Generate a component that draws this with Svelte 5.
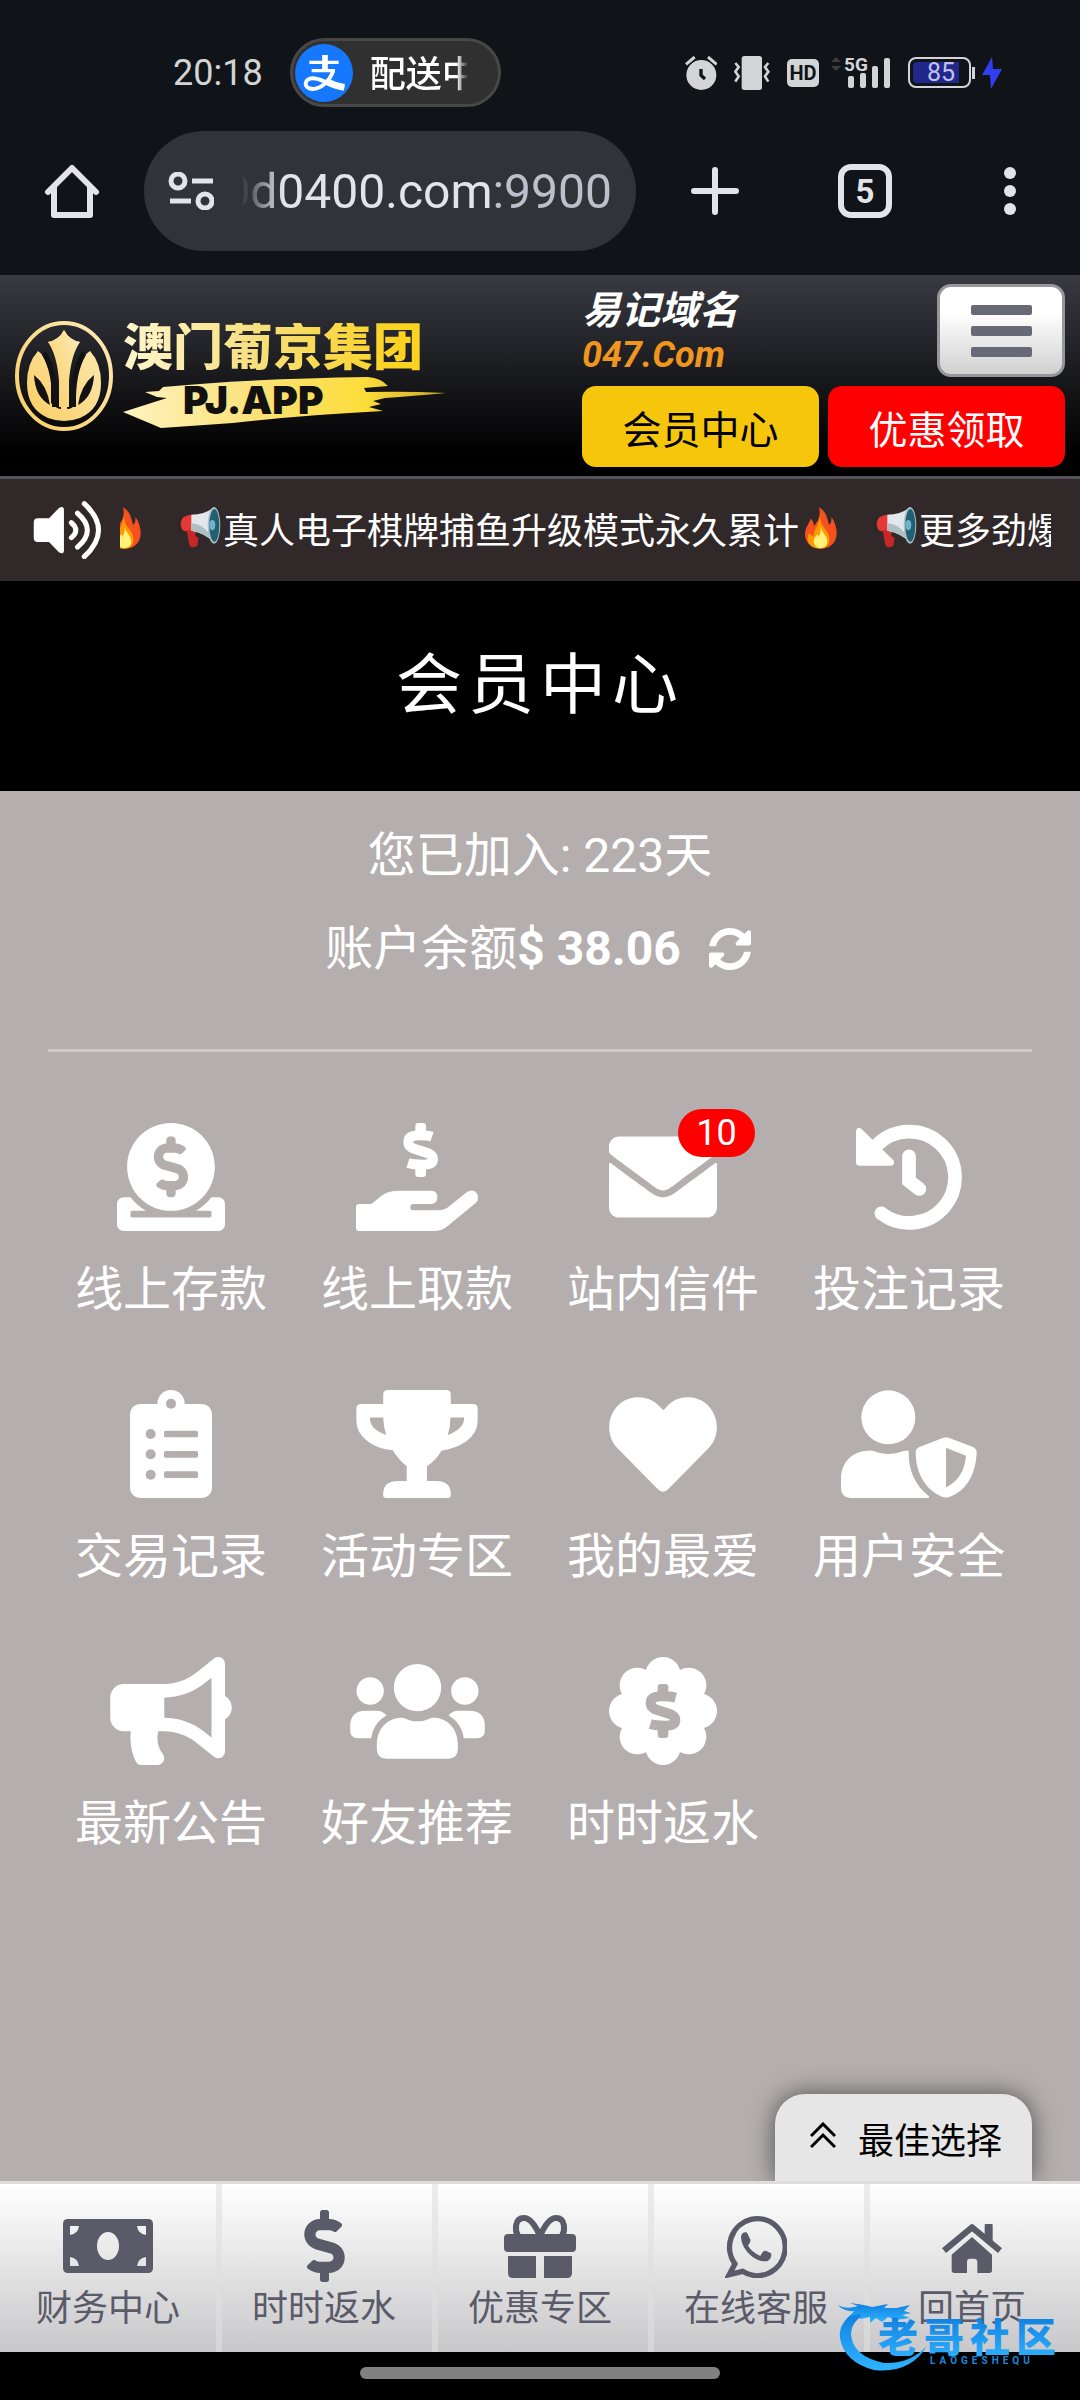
<script>
  const scroll = 17;

  const fire =
    '<path fill="#f4511e" d="M60 4C88 20 84 46 91 56c7-6 7-16 6-24 15 22 19 46 14 64-6 22-24 32-45 32-27 0-46-16-48-40-1-22 12-34 17-50 8 6 9 14 10 22C58 46 66 28 60 4Z"/>' +
    '<path fill="#ff9800" d="M62 30c2 24 12 32 22 46 10 16 16 50-20 52-32 1-46-24-34-46 8 6 10 8 14 8C44 70 62 54 62 30Z"/>' +
    '<path fill="#fff176" d="M65 60c0 18 20 26 20 46 0 14-8 20-20 20s-22-8-21-22c1-10 8-14 12-20l3 8c5-8 7-20 6-32Z"/>';
  const horn =
    '<path fill="#e53935" d="M16 34Q32 24 52 26V74Q30 78 16 74Q8 66 8 54T16 34Z"/>' +
    '<path fill="#c62828" d="M26 72L54 74L52 90L62 96L58 118Q56 124 46 124Q36 124 34 116Z"/>' +
    '<path fill="#e3e8ec" d="M40 26Q80 26 106 5L112 112Q84 82 40 74Z"/>' +
    '<path fill="#b0bec5" d="M40 52Q80 54 100 96L110 112Q84 82 40 74Z"/>' +
    '<ellipse cx="108" cy="58" rx="19" ry="55" fill="#b0bec5"/><ellipse cx="109" cy="58" rx="15" ry="49" fill="#1f6173"/>' +
    '<ellipse cx="103" cy="57" rx="9" ry="16" fill="#6fb3cc"/>';

  const money =
    '<path fill="none" stroke="currentColor" stroke-width="30" d="M232 41C216 37 208 37 190 37C165 37 157 45 157 58C157 72 170 77 192 83C220 91 231 95 231 108C231 120 222 125 200 125C180 125 172 125 156 120"/>' +
    '<rect x="178" width="32" height="34" rx="9"/><rect x="178" y="128" width="32" height="34" rx="9"/>';

  const items = [
    { label: '线上存款', w: 108, box: '0 0 512 512', art: '<path d="M256 416c114.900 0 208-93.100 208-208S370.900 0 256 0 48 93.100 48 208s93.100 208 208 208zM233.800 97.400V80.600c0-9.200 7.400-16.600 16.600-16.600h11.100c9.200 0 16.600 7.400 16.600 16.600v17c15.500.8 30.500 6.100 43 15.400 5.600 4.100 6.200 12.300 1.200 17.100L306 145.600c-3.800 3.700-9.500 3.800-14 1-5.400-3.400-11.400-5.100-17.800-5.100h-38.900c-9 0-16.300 8.200-16.300 18.300 0 8.200 5 15.500 12.100 17.600l62.300 18.700c25.700 7.700 43.700 32.400 43.700 60.100 0 34-26.400 61.500-59.100 62.400v16.800c0 9.200-7.400 16.600-16.600 16.600h-11.100c-9.200 0-16.600-7.400-16.600-16.600v-17c-15.500-.8-30.500-6.100-43-15.400-5.600-4.100-6.200-12.300-1.200-17.100l16.300-15.500c3.800-3.700 9.500-3.800 14-1 5.400 3.400 11.400 5.100 17.800 5.100h38.900c9 0 16.300-8.200 16.300-18.300 0-8.200-5-15.500-12.100-17.600l-62.300-18.700c-25.700-7.700-43.700-32.400-43.700-60.100.1-34 26.400-61.500 59.100-62.400zM480 352h-32.500c-19.600 26-44.600 47.700-73 64h63.800c5.300 0 9.600 3.600 9.600 8v16c0 4.400-4.300 8-9.600 8H73.600c-5.300 0-9.600-3.600-9.600-8v-16c0-4.400 4.300-8 9.600-8h63.800c-28.400-16.300-53.300-38-73-64H32c-17.700 0-32 14.300-32 32v96c0 17.700 14.300 32 32 32h448c17.700 0 32-14.300 32-32v-96c0-17.700-14.300-32-32-32z"/>' },
    { label: '线上取款', w: 122, box: '0 0 366 324', art: money.replaceAll('M232', 'M228') + '<path d="M0 252Q0 243 9 243H46L72 222Q94 203 124 203H226Q244 204 244 223T226 243H172Q163 243 163 253T172 262H246Q262 262 272 256L332 208Q342 201 352 203Q366 208 366 224Q366 234 358 241L276 308Q258 324 234 324H9Q0 324 0 315Z"/>' },
    { label: '站内信件', w: 108, badge: 10, box: '0 0 512 512', art: '<path d="M502.300 190.800c3.900-3.100 9.700-.2 9.700 4.700V400c0 26.500-21.500 48-48 48H48c-26.500 0-48-21.500-48-48V195.600c0-5 5.700-7.800 9.700-4.700 22.400 17.400 52.100 39.500 154.100 113.600 21.100 15.400 56.700 47.800 92.200 47.600 35.700.3 72-32.800 92.300-47.600 102-74.100 131.600-96.300 154-113.700zM256 320c23.200.4 56.600-29.200 73.400-41.400 132.700-96.300 142.800-104.700 173.400-128.700 5.800-4.500 9.200-11.500 9.200-18.900v-19c0-26.500-21.500-48-48-48H48c-26.500 0-48 21.500-48 48v19c0 7.400 3.400 14.300 9.200 18.900 30.600 23.900 40.700 32.400 173.400 128.700 16.800 12.200 50.200 41.800 73.400 41.400z"/>' },
    { label: '投注记录', w: 108, box: '0 0 324 324', art: '<path fill="none" stroke="currentColor" stroke-width="41" stroke-linecap="round" d="M66 66A137 137 0 1 1 79 271M162 100V174L193 198"/><path d="M3 25Q6 8 19 17L115 112Q122 126 108 128H12Q3 128 3 118Z"/>' },
    { label: '交易记录', w: 82, box: '0 0 246 324', art: '<rect y="42" width="246" height="282" rx="30"/><circle cx="123" cy="41" r="41"/><g fill="#b4aeae"><circle cx="123" cy="41" r="15"/><circle cx="62" cy="132" r="15"/><circle cx="62" cy="193" r="15"/><circle cx="62" cy="254" r="15"/><rect x="102" y="122" width="102" height="20" rx="5"/><rect x="102" y="183" width="102" height="20" rx="5"/><rect x="102" y="244" width="102" height="20" rx="5"/></g>' },
    { label: '活动专区', w: 122, box: '0 0 366 326', art: '<path fill-rule="evenodd" d="M81 14Q81 0 95 0H271Q285 0 285 14V42H352Q366 42 366 56V94Q366 130 330 156Q300 176 257 183Q240 212 213 230V275H240Q284 275 285 312V318Q285 326 277 326H89Q81 326 81 318V312Q82 275 126 275H152V230Q128 212 110 182Q66 178 36 156Q0 130 0 94V56Q0 42 14 42H81ZM41 83V90Q44 120 90 136Q82 112 81 83ZM284 83Q284 112 276 136Q322 118 325 90V83Z"/>' },
    { label: '我的最爱', w: 108, box: '0 -21 324 324', art: '<path d="M163 40L148 25C118-6 62-8 28 24C-8 60-8 118 24 152L146 276Q162 293 178 276L300 152C332 118 332 60 296 24C262-8 206-6 177 25Z"/>' },
    { label: '用户安全', w: 136, box: '0 0 408 324', art: '<circle cx="142" cy="82" r="81"/><path d="M82 182Q98 181 108 187Q142 197 176 187Q190 181 203 182C202 246 224 286 264 319Q266 324 260 324H32Q0 324 0 292V266C0 218 34 182 82 182Z"/><path fill-rule="evenodd" d="M305 144Q315 140 325 144L396 171Q407 176 407 187C405 250 378 300 330 319Q315 326 300 319C250 297 224 245 224 187Q224 176 235 171ZM315 173V292Q370 264 375 197Z"/>' },
    { label: '最新公告', w: 122, box: '0 0 576 512', art: '<path d="M576 240c0-23.630-12.950-44.040-32-55.120V32.010C544 23.260 537.020 0 512 0c-7.120 0-14.190 2.380-19.980 7.020l-85.030 68.030C364.280 109.190 310.660 128 256 128H64c-35.350 0-64 28.650-64 64v96c0 35.350 28.650 64 64 64h33.700c-1.390 10.480-2.180 21.140-2.180 32 0 39.770 9.260 77.350 25.560 110.940 5.190 10.690 16.520 17.060 28.400 17.060h74.280c26.050 0 41.690-29.840 25.900-50.560-16.400-21.520-26.150-48.360-26.150-77.440 0-11.110 1.620-21.790 4.410-32H256c54.660 0 108.280 18.810 150.980 52.950l85.030 68.030a32.023 32.023 0 0 0 19.980 7.020c24.920 0 32-22.780 32-32V295.130C563.050 284.040 576 263.630 576 240zm-96 141.420l-33.050-26.440C392.950 311.780 325.120 288 256 288v-96c69.120 0 136.950-23.780 190.950-66.980L480 98.580v282.840z"/>' },
    { label: '好友推荐', w: 135, box: '0 0 404 324', art: '<circle cx="202" cy="92" r="71"/><circle cx="60" cy="102" r="41"/><circle cx="344" cy="102" r="41"/><path d="M80 264C80 214 112 182 155 182C168 182 170 192 202 193C234 192 236 182 249 182C292 182 323 214 323 264V276Q323 305 294 305H109Q80 305 80 276Z"/><path d="M0 208Q0 161 46 161H80Q98 161 109 175Q68 200 63 244H24Q0 244 0 220Z"/><path d="M404 208Q404 161 358 161H324Q306 161 295 175Q336 200 341 244H380Q404 244 404 220Z"/>' },
    { label: '时时返水', w: 108, box: '0 0 324 324', art: '<circle cx="162" cy="162" r="120"/>' + [0, 45, 90, 135, 180, 225, 270, 315].map((a) => `<circle cx="162" cy="53" r="53" transform="rotate(${a} 162 162)"/>`).join('') + '<g fill="#b4aeae" color="#b4aeae" transform="translate(-32 81)">' + money + '</g>' }
  ];

  const tabs = [
    { label: '财务中心', w: 90, h: 54, box: '0 0 90 54', art: '<path fill-rule="evenodd" d="M5 0H85Q90 0 90 5V49Q90 54 85 54H5Q0 54 0 49V5Q0 0 5 0ZM7 7V16Q15 15 16 7ZM74 7Q75 15 83 16V7ZM7 38V47H16Q15 39 7 38ZM83 38Q75 39 74 47H83ZM45 13A11 14 0 1 0 45 41A11 14 0 1 0 45 13Z"/>' },
    { label: '时时返水', w: 41, h: 72, box: '0 0 288 512', art: '<path d="M209.200 233.400l-108-31.600C88.700 198.200 80 186.500 80 173.500c0-16.300 13.200-29.500 29.500-29.500h66.300c12.200 0 24.200 3.700 34.200 10.500 6.100 4.100 14.300 3.100 19.500-2l34.800-34c7.100-6.900 6.100-18.400-1.800-24.500C238 74.800 207.400 64.100 176 64V16c0-8.800-7.200-16-16-16h-32c-8.800 0-16 7.200-16 16v48h-2.500C45.800 64-5.400 118.700.5 183.600c4.200 46.100 39.400 83.600 83.800 96.600l102.500 30c12.500 3.700 21.200 15.300 21.200 28.300 0 16.300-13.200 29.500-29.500 29.500h-66.300C100 368 88 364.300 78 357.500c-6.100-4.100-14.300-3.100-19.500 2l-34.800 34c-7.100 6.900-6.100 18.400 1.800 24.500 24.500 19.200 55.100 29.900 86.500 30v48c0 8.800 7.200 16 16 16h32c8.800 0 16-7.200 16-16v-48.200c46.600-.9 90.300-28.600 105.700-72.700 21.500-61.600-14.600-124.800-72.500-141.700z"/>' },
    { label: '优惠专区', w: 72, h: 63, box: '0 0 72 63', art: '<rect y="19" width="72" height="18" rx="4"/><path d="M4 41H32V63H9Q4 63 4 58ZM40 41H68V58Q68 63 63 63H40Z"/><path fill="none" stroke="currentColor" stroke-width="6" d="M36 21C32 12 27 3 20 3C10 3 11 16 14 21M36 21C40 12 45 3 52 3C62 3 61 16 58 21"/>' },
    { label: '在线客服', w: 62, h: 63, box: '537 463 182 188', art: '<path fill="none" stroke="currentColor" stroke-width="16" d="M565 609A83 85 0 1 1 588 631L548 641Z"/><path d="M583 528Q586 513 601 515L611 536Q613 545 604 554Q615 574 641 585Q649 568 657 570L673 577Q676 592 663 600Q641 606 615 586Q584 560 583 528Z"/>' },
    { label: '回首页', w: 60, h: 53, box: '1164 486 180 159', art: '<path fill="none" stroke="currentColor" stroke-width="19" stroke-linejoin="round" d="M1170 578L1254 508L1338 578"/><rect x="1292" y="498" width="24" height="52" rx="3"/><path d="M1193 590L1254 537L1314 590V637Q1314 645 1306 645H1270V612Q1270 602 1260 602H1248Q1239 602 1239 612V645H1201Q1193 645 1193 637Z"/>' }
  ];
</script>

<div class="page">
  <div class="status">
    <div class="status-left">
      <span class="time">20:18</span>
      <div class="activity">
        <svg width="58" height="58" viewBox="0 0 174 174" aria-hidden="true">
          <circle cx="87" cy="87" r="87" fill="#1677ff" />
          <g fill="none" stroke="#fff" stroke-width="12">
            <path d="M43 55H131M50 80H120" stroke-width="10" />
            <path d="M90 33V81" stroke-width="17" />
            <path d="M114 81C106 106 82 135 52 135C24 133 26 103 54 103C76 103 92 120 148 128" stroke-width="12" />
            <path d="M98 114Q120 126 148 130" stroke-width="20" />
          </g>
        </svg>
        <span class="activity-text">配送中</span>
      </div>
    </div>
    <div class="status-right">
      <svg width="32" height="34" viewBox="66 45 94 102" aria-hidden="true">
        <circle cx="114" cy="102" r="45" fill="#d3d4d5" />
        <path d="M68 70L94 48M160 70L134 48" stroke="#d3d4d5" stroke-width="9" />
        <path d="M113 84V103L125 114" fill="none" stroke="#101418" stroke-width="10" />
      </svg>
      <svg width="36" height="34" viewBox="218 45 108 102" aria-hidden="true">
        <rect x="241" y="45" width="61" height="102" rx="8" fill="#d3d4d5" />
        <path d="M222 66L232 78L222 92L232 106L222 122M321 66L311 78L321 92L311 106L321 122" fill="none" stroke="#d3d4d5" stroke-width="8" />
      </svg>
      <div class="network">
        <span class="hd">HD</span>
        <svg width="60" height="34" viewBox="0 0 60 34" aria-label="5G">
          <path d="M0 6L5 1L10 6ZM0 10L5 15L10 10Z" fill="#3a3d40" />
          <text x="13" y="15" font-size="19" font-weight="700" fill="#d3d4d5">5G</text>
          <g fill="#d3d4d5"><rect x="17" y="20" width="6" height="12" rx="2" /><rect x="29" y="17" width="6" height="15" rx="2" /><rect x="41" y="10" width="6" height="22" rx="2" /><rect x="53" y="2" width="6" height="30" rx="2" /></g>
        </svg>
      </div>
      <div class="power">
        <span class="battery"><span class="charge">85</span></span>
        <i class="cap"></i>
        <svg width="20" height="32" viewBox="0 0 20 32" aria-hidden="true"><path d="M10 0L0 18H8L9 32L20 12H11Z" fill="#2f3ff0" /></svg>
      </div>
    </div>
  </div>

  <div class="toolbar">
    <button class="tool home" aria-label="主页">
      <svg width="56" height="56" viewBox="0 0 56 56" fill="none" stroke="#e2e4ea" stroke-width="6" stroke-linecap="round" stroke-linejoin="round"><path d="M4 29L28 5L52 29" /><path d="M10 25V52H46V25" /></svg>
    </button>
    <button class="address">
      <svg width="46" height="38" viewBox="0 0 46 38" fill="none" stroke="#e2e4ea" stroke-width="5"><circle cx="10" cy="9" r="7" /><path d="M24 9H45M2 29H23" /><circle cx="37" cy="29" r="7" /></svg>
      <span class="url">0d0400.com<span class="port">:9900</span></span>
    </button>
    <button class="tool" aria-label="新标签页">
      <svg width="48" height="48" viewBox="0 0 48 48" stroke="#e2e4ea" stroke-width="6" stroke-linecap="round"><path d="M24 3V45M3 24H45" /></svg>
    </button>
    <button class="tool"><span class="count">5</span></button>
    <button class="tool more" aria-label="更多">
      <svg width="12" height="48" viewBox="0 0 12 48" fill="#e2e4ea"><circle cx="6" cy="6" r="6" /><circle cx="6" cy="24" r="6" /><circle cx="6" cy="42" r="6" /></svg>
    </button>
  </div>

  <header class="site">
    <a class="logo" href="#home">
      <svg class="emblem" width="98" height="110" viewBox="0 0 98 110" aria-hidden="true">
        <defs><linearGradient id="gold" x1="0" x2="1" y1="1" y2="0"><stop offset="0" stop-color="#f9cd62" /><stop offset="1" stop-color="#fdebb8" /></linearGradient></defs>
        <ellipse cx="49" cy="55" rx="47" ry="53" fill="none" stroke="url(#gold)" stroke-width="4" />
        <g fill="url(#gold)">
          <path d="M23 30Q34 38 36 58V82Q42 88 46 88V50Q44 30 33 21Q44 19 49 9Q54 19 65 21Q54 30 52 50V88Q58 88 61 82V58Q63 38 75 30Q86 42 86 62Q86 88 65 97Q49 103 33 97Q12 88 12 62Q12 42 23 30Z" />
          <path d="M33 21Q44 19 49 9Q54 19 65 21Q56 34 54 60V86H44V60Q42 34 33 21Z" />
        </g>
        <path d="M31 30Q43 50 43 86H37Q38 52 27 34ZM67 30Q55 50 55 86H61Q60 52 71 34ZM19 54Q32 64 35 84Q20 76 19 54ZM79 54Q66 64 63 84Q78 76 79 54Z" fill="#121215" />
      </svg>
      <span class="brand">
        <span class="brand-name">澳门葡京集团</span>
        <svg width="324" height="52" viewBox="0 0 324 52" aria-label="PJ.APP">
          <defs><linearGradient id="brush" x1="0" x2="1"><stop offset="0" stop-color="#fff3c0" /><stop offset="0.4" stop-color="#fbe27a" /><stop offset="0.75" stop-color="#fddd3a" /><stop offset="1" stop-color="#c9a52a" /></linearGradient></defs>
          <path fill="url(#brush)" d="M0 35L44 21L34 20L22 15L36 14L40 10Q120 2 245 0Q258 1 265 9L241 11L243 15Q285 14 323 16Q290 19 262 21L250 24L258 27L246 30L260 34Q180 38 110 46L38 51Z" />
          <text x="60" y="37" font-size="39" font-weight="900" fill="#111">PJ.APP</text>
        </svg>
      </span>
    </a>
    <div class="quick">
      <div class="quick-top">
        <p class="domain">易记域名<br /><span>047.Com</span></p>
        <button class="menu" aria-label="菜单"><i></i><i></i><i></i></button>
      </div>
      <div class="quick-actions">
        <button class="member">会员中心</button>
        <button class="promo">优惠领取</button>
      </div>
    </div>
  </header>

  <div class="notice">
    <svg class="speaker" width="69" height="58" viewBox="97 693 199 171" fill="none" stroke="#fff" stroke-width="15" stroke-linecap="round" aria-hidden="true">
      <path fill="#fff" stroke="none" d="M109 744H142L172 713Q186 706 186 720V838Q186 852 172 845L142 814H109Q97 814 97 802V756Q97 744 109 744Z" />
      <path d="M208 757Q234 779 208 801M226 729Q284 779 226 829M246 701Q330 779 246 857" />
    </svg>
    <div class="window">
      <div class="track" style="transform: translateX({-scroll}px)">
        <span class="news"><svg class="emoji" viewBox="0 0 135 135" aria-hidden="true">{@html fire}</svg></span>
        <span class="news"><svg class="emoji" viewBox="0 0 135 135" aria-hidden="true">{@html horn}</svg>真人电子棋牌捕鱼升级模式永久累计<svg class="emoji" viewBox="0 0 135 135" aria-hidden="true">{@html fire}</svg></span>
        <span class="news"><svg class="emoji" viewBox="0 0 135 135" aria-hidden="true">{@html horn}</svg>更多劲爆</span>
      </div>
    </div>
  </div>

  <h1>会员中心</h1>

  <main>
    <p class="line">您已加入: 223天</p>
    <p class="line balance">
      <span>账户余额<b>$ 38.06</b></span>
      <button class="refresh" aria-label="刷新">
        <svg width="42" height="42" viewBox="8 8 496 496" fill="#fff"><path d="M370.720 133.280C339.458 104.008 298.888 87.962 255.848 88c-77.458.068-144.328 53.178-162.791 126.850-1.344 5.363-6.122 9.150-11.651 9.150H24.103c-7.498 0-13.194-6.807-11.807-14.176C33.933 94.924 134.813 8 256 8c66.448 0 126.791 26.136 171.315 68.685L463.030 40.970C478.149 25.851 504 36.559 504 57.941V192c0 13.255-10.745 24-24 24H345.941c-21.382 0-32.090-25.851-16.971-40.971l41.750-41.749zM32 296h134.059c21.382 0 32.090 25.851 16.971 40.971l-41.750 41.750c31.262 29.273 71.835 45.319 114.876 45.280 77.418-.07 144.315-53.144 162.787-126.849 1.344-5.363 6.122-9.150 11.651-9.150h57.304c7.498 0 13.194 6.807 11.807 14.176C478.067 417.076 377.187 504 256 504c-66.448 0-126.791-26.136-171.315-68.685L48.970 471.030C33.851 486.149 8 475.441 8 454.059V320c0-13.255 10.745-24 24-24z" /></svg>
      </button>
    </p>
    <hr />
    <div class="grid">
      {#each items as item}
        <a class="cell" href="#member">
          <span class="pic">
            <svg width={item.w} height="108" viewBox={item.box} fill="currentColor" aria-hidden="true">{@html item.art}</svg>
            {#if item.badge}<span class="badge">{item.badge}</span>{/if}
          </span>
          <span>{item.label}</span>
        </a>
      {/each}
    </div>
    <button class="best">
      <svg width="26" height="26" viewBox="0 0 26 26" fill="none" stroke="#000" stroke-width="3"><path d="M1 14L13 2L25 14M1 25L13 13L25 25" /></svg>
      最佳选择
    </button>
  </main>

  <nav>
    {#each tabs as tab}
      <a href="#tab">
        <span class="tab-pic"><svg width={tab.w} height={tab.h} viewBox={tab.box} fill="currentColor" aria-hidden="true">{@html tab.art}</svg></span>
        <span>{tab.label}</span>
      </a>
    {/each}
  </nav>

  <div class="gesture"><i></i></div>

  <svg class="watermark" width="240" height="90" viewBox="0 0 240 90" aria-label="老哥社区">
    <defs><linearGradient id="sea" x1="0" x2="0" y1="0" y2="1"><stop offset="0" stop-color="#0f7fe0" /><stop offset="1" stop-color="#2fb4ff" /></linearGradient></defs>
    <g fill="url(#sea)">
      <path d="M24 22Q8 34 10 48Q14 72 44 80Q80 84 97 56Q80 74 54 73Q22 66 21 44Q21 32 34 25Z" />
      <path d="M8 15Q16 20 28 16L20 13Q36 15 42 17L58 14L54 18L66 18L80 15L74 21L81 23L72 25L80 28L66 30L58 27L52 32L46 28L40 33L40 27L30 29L30 24L20 26L24 21Q14 22 8 15Z" />
      <text class="mark" x="48" y="62">老哥社区</text>
    </g>
    <text class="mark-sub" x="100" y="74">LAOGESHEQU</text>
  </svg>
</div>

<style>
  :global(body) {
    margin: 0;
    background: #000;
  }
  .page {
    position: relative;
    min-height: 100vh;
    display: flex;
    flex-direction: column;
    font-family: Roboto, 'Noto Sans CJK SC', sans-serif;
    color: #fff;
    overflow: hidden;
  }
  button {
    font: inherit;
    color: inherit;
    border: 0;
    padding: 0;
    background: none;
    cursor: pointer;
  }
  a {
    color: inherit;
    text-decoration: none;
  }
  svg {
    display: block;
    flex: none;
  }
  p {
    margin: 0;
  }

  .status {
    display: flex;
    justify-content: space-between;
    align-items: center;
    padding: 38px 78px 24px 173px;
    background: #101418;
  }
  .status-left,
  .status-right,
  .network,
  .power {
    display: flex;
    align-items: center;
  }
  .status-left {
    gap: 27px;
  }
  .status-right {
    gap: 17px;
  }
  .network {
    gap: 12px;
  }
  .time {
    font-size: 36px;
    color: #d3d4d5;
  }
  .activity {
    box-sizing: border-box;
    display: flex;
    align-items: center;
    width: 211px;
    height: 69px;
    padding-left: 2px;
    gap: 17px;
    border: 3px solid #474747;
    border-radius: 35px;
    background: #303030;
  }
  .activity-text {
    width: 98px;
    padding-bottom: 4px;
    overflow: hidden;
    white-space: nowrap;
    font-size: 36px;
    font-weight: 500;
    mask-image: linear-gradient(90deg, #000 88%, transparent);
  }
  .hd {
    width: 32px;
    line-height: 28px;
    border-radius: 5px;
    background: #d3d4d5;
    color: #101418;
    font-size: 20px;
    font-weight: 700;
    text-align: center;
  }
  .battery {
    box-sizing: border-box;
    width: 63px;
    height: 31px;
    padding: 3px;
    border: 2px solid #d3d4d5;
    border-radius: 8px;
  }
  .charge {
    box-sizing: border-box;
    display: block;
    width: 46px;
    padding-right: 4px;
    line-height: 21px;
    border-radius: 4px 0 0 4px;
    background: #20288c;
    color: #c0c2ee;
    font-size: 25px;
    text-align: right;
  }
  .cap {
    width: 3px;
    height: 12px;
    margin: 0 7px 0 1px;
    background: #d3d4d5;
  }

  .toolbar {
    display: flex;
    align-items: center;
    padding-bottom: 24px;
    background: #101418;
  }
  .tool {
    display: flex;
    justify-content: center;
    align-items: center;
    width: 150px;
    height: 120px;
  }
  .home {
    width: 144px;
  }
  .more {
    width: 140px;
  }
  .address {
    flex: 1;
    min-width: 0;
    display: flex;
    align-items: center;
    gap: 27px;
    height: 120px;
    margin-right: 4px;
    padding: 0 24px;
    border-radius: 60px;
    background: #303338;
    color: #e2e4ea;
    font-size: 48px;
  }
  .url {
    flex: 1;
    min-width: 0;
    display: flex;
    justify-content: flex-end;
    overflow: hidden;
    white-space: nowrap;
    mask-image: linear-gradient(90deg, transparent, #000 42px);
  }
  .port {
    color: #bcc0cb;
  }
  .count {
    box-sizing: border-box;
    width: 54px;
    height: 54px;
    border: 6px solid #e2e4ea;
    border-radius: 13px;
    color: #e2e4ea;
    font-size: 33px;
    font-weight: 700;
    line-height: 43px;
  }

  .site {
    display: flex;
    justify-content: space-between;
    align-items: center;
    padding: 9px 15px;
    border-bottom: 3px solid #54535a;
    background: linear-gradient(#393a42, #000 90%);
  }
  .logo {
    display: flex;
    align-items: center;
    gap: 10px;
  }
  .brand {
    display: flex;
    flex-direction: column;
    gap: 4px;
  }
  .brand-name {
    font-size: 50px;
    line-height: 50px;
    font-weight: 900;
    background: linear-gradient(90deg, #fff6cf, #f7df7c 45%, #fbd21f 92%);
    background-clip: text;
    color: transparent;
    width: max-content;
  }
  .brand text {
    font-family: Inter, 'Liberation Sans', sans-serif;
  }
  .quick {
    display: flex;
    flex-direction: column;
    gap: 9px;
    width: 483px;
  }
  .quick-top {
    display: flex;
    justify-content: space-between;
    align-items: flex-end;
  }
  .domain {
    font-size: 39px;
    font-weight: 700;
    font-style: italic;
    line-height: 43px;
  }
  .domain span {
    color: #f0951e;
    font-size: 36px;
  }
  .menu {
    box-sizing: border-box;
    width: 128px;
    height: 93px;
    display: flex;
    flex-direction: column;
    align-items: center;
    justify-content: center;
    gap: 11px;
    border: 3px solid #96969c;
    border-radius: 14px;
    background: linear-gradient(#fff 30%, #d0d0d0);
  }
  .menu i {
    width: 61px;
    height: 10px;
    border-radius: 2px;
    background: #686977;
  }
  .quick-actions {
    display: grid;
    grid-template-columns: 1fr 1fr;
    gap: 9px;
  }
  .quick-actions button {
    height: 81px;
    border-radius: 14px;
    font-size: 39px;
  }
  .member {
    background: #f5c60c;
    color: #000;
  }
  .promo {
    background: #f00;
  }

  .notice {
    display: flex;
    align-items: center;
    gap: 18px;
    height: 102px;
    padding: 0 29px 0 33px;
    background: #312829;
    font-size: 36px;
  }
  .window {
    flex: 1;
    min-width: 0;
    padding-bottom: 4px;
    overflow: hidden;
  }
  .track {
    display: flex;
    gap: 30px;
    width: max-content;
  }
  .news {
    display: flex;
    align-items: center;
    white-space: nowrap;
  }
  .emoji {
    width: 45px;
    height: 45px;
  }

  h1 {
    margin: 0;
    font-size: 66px;
    font-weight: 400;
    line-height: 210px;
    letter-spacing: 6px;
    text-align: center;
    background: #000;
  }

  main {
    position: relative;
    flex: 1;
    padding: 18px 48px 0;
    background: #b4aeae;
    font-size: 48px;
  }
  .line {
    line-height: 93px;
    text-align: center;
  }
  .balance {
    display: flex;
    justify-content: center;
    align-items: center;
    gap: 28px;
    padding-right: 4px;
  }
  hr {
    height: 3px;
    margin: 54px 0 0;
    border: 0;
    background: #cfc9c9;
  }
  .grid {
    display: grid;
    grid-template-columns: repeat(4, 1fr);
    row-gap: 68px;
    padding-top: 71px;
  }
  .cell {
    display: flex;
    flex-direction: column;
    align-items: center;
    gap: 27px;
    line-height: 64px;
  }
  .pic {
    position: relative;
  }
  .badge {
    position: absolute;
    left: 69px;
    top: -14px;
    width: 77px;
    border-radius: 24px;
    background: #f00;
    font-size: 36px;
    line-height: 48px;
    text-align: center;
  }
  .best {
    position: absolute;
    right: 48px;
    bottom: 0;
    display: flex;
    align-items: center;
    gap: 22px;
    height: 87px;
    padding: 0 30px 0 35px;
    border-radius: 30px 30px 0 0;
    background: #e6e6e6;
    box-shadow: 0 0 24px rgba(0, 0, 0, 0.55);
    color: #000;
    font-size: 36px;
  }
  .best svg {
    margin-bottom: 6px;
  }

  nav {
    position: relative;
    display: grid;
    grid-template-columns: repeat(5, 1fr);
    height: 168px;
    border-top: 3px solid #dedcdc;
    background: linear-gradient(#fff, #c8c8ca);
    color: #5b5a68;
    font-size: 36px;
    line-height: 42px;
  }
  nav a {
    position: relative;
    display: flex;
    flex-direction: column;
    align-items: center;
    gap: 6px;
    padding-top: 26px;
  }
  nav a + a::before {
    content: '';
    position: absolute;
    inset: 0 auto 0 0;
    width: 6px;
    background: rgba(224, 224, 224, 0.6);
  }
  .tab-pic {
    display: flex;
    align-items: center;
    height: 72px;
  }
  .gesture {
    display: flex;
    justify-content: center;
    padding: 15px 0 21px;
    background: #000;
  }
  .gesture i {
    width: 33.3333%;
    height: 12px;
    border-radius: 6px;
    background: #808080;
  }
  .watermark {
    position: absolute;
    right: 10px;
    bottom: 20px;
  }
  .mark {
    font-size: 40px;
    font-weight: 900;
    letter-spacing: 6px;
  }
  .mark-sub {
    fill: #1c86d8;
    font-size: 10px;
    font-weight: 700;
    letter-spacing: 4px;
  }
</style>
